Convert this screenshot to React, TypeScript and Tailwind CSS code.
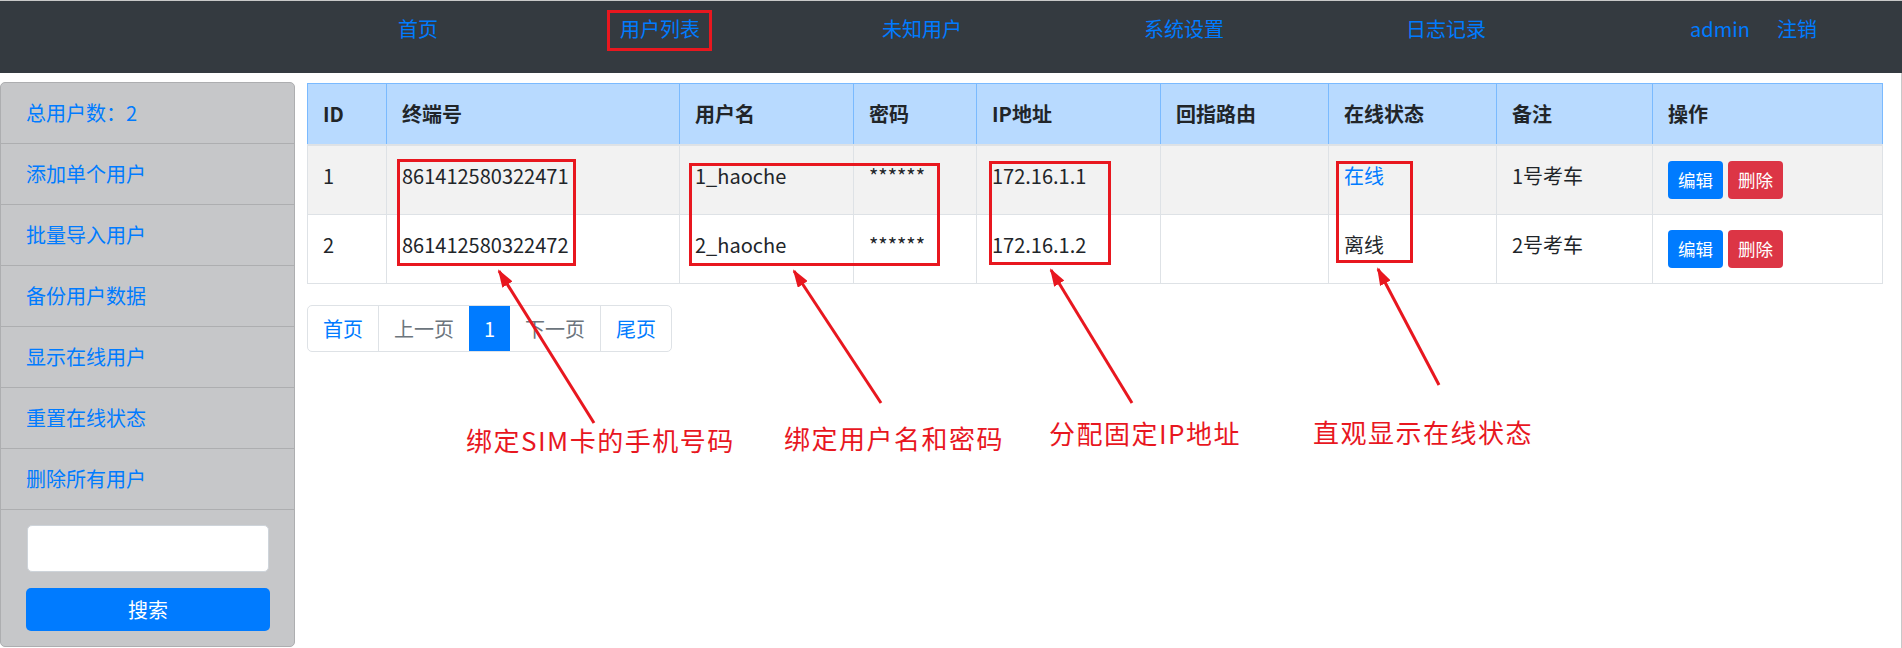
import React from "react";

const RED = "#e8171f";

const navItems = ["首页", "用户列表", "未知用户", "系统设置", "日志记录"];
const sideItems = ["总用户数：2", "添加单个用户", "批量导入用户", "备份用户数据", "显示在线用户", "重置在线状态", "删除所有用户"];
const headers: { t: string; w: string }[] = [
  { t: "ID", w: "w-[79px]" },
  { t: "终端号", w: "w-[293px]" },
  { t: "用户名", w: "w-[174px]" },
  { t: "密码", w: "w-[123px]" },
  { t: "IP地址", w: "w-[184px]" },
  { t: "回指路由", w: "w-[168px]" },
  { t: "在线状态", w: "w-[168px]" },
  { t: "备注", w: "w-[156px]" },
  { t: "操作", w: "w-[230px]" },
];
const rows = [
  { id: "1", sim: "861412580322471", user: "1_haoche", ip: "172.16.1.1", online: true, note: "1号考车" },
  { id: "2", sim: "861412580322472", user: "2_haoche", ip: "172.16.1.2", online: false, note: "2号考车" },
];

const boxes: [number, number, number, number][] = [
  [607, 10, 712, 51],
  [397, 159, 576, 266],
  [689, 163, 940, 266],
  [989, 161, 1111, 265],
  [1336, 161, 1413, 263],
];
const arrows: [number, number, number, number][] = [
  [594, 423, 499, 271],
  [881, 403, 794, 271],
  [1132, 403, 1051, 270],
  [1439, 385, 1378, 269],
];

export default function App() {
  return (
    <div className="relative w-[1902px] h-[648px] overflow-hidden bg-white text-[20px] text-[#212529] font-['Noto_Sans_CJK_SC',sans-serif]">
      <nav className="h-[73px] border-t border-[#c8c8c8] bg-[#343a40] flex items-start pt-[13px] leading-[30px] text-[#007bff]">
        <div className="flex gap-[182px] pl-[398px]">
          {navItems.map((n) => (
            <span key={n}>{n}</span>
          ))}
        </div>
        <div className="ml-auto mr-[85px] flex gap-[27px]">
          <span>admin</span>
          <span>注销</span>
        </div>
      </nav>

      <div className="flex h-[575px] pt-[9px] border-r border-[#c8c8c8]">
        <aside className="w-[295px] h-[565px] shrink-0 rounded-[5px] border border-[#adaeb0] bg-[#c6c7c9] flex flex-col">
          {sideItems.map((s) => (
            <div key={s} className="h-[61px] shrink-0 border-b border-[#adaeb0] pl-[25px] flex items-center text-[#007bff] leading-[30px]">
              {s}
            </div>
          ))}
          <div className="pt-[15px] pl-[25px] flex flex-col gap-[16px]">
            <input className="w-[242px] h-[47px] rounded-[5px] border border-[#ced4da] bg-white ml-px outline-none" />
            <button className="w-[244px] h-[43px] rounded-[5px] bg-[#007bff] text-white leading-[30px]">搜索</button>
          </div>
        </aside>

        <div className="ml-[12px] pt-px">
          <table className="w-[1575px] table-fixed border-collapse">
            <thead>
              <tr className="bg-[#b8daff]">
                {headers.map((h) => (
                  <th
                    key={h.t}
                    className={`${h.w} px-[15px] py-[15px] leading-[30px] text-left font-bold border border-[#7abaff] border-b-2 border-b-[#dee2e6]`}
                  >
                    {h.t}
                  </th>
                ))}
              </tr>
            </thead>
            <tbody>
              {rows.map((r, i) => (
                <tr key={r.id} className={i === 0 ? "bg-[#f2f2f2]" : "bg-white"}>
                  <td className="px-[15px] py-[15px] leading-[30px] align-top border border-[#dee2e6]">{r.id}</td>
                  <td className="px-[15px] py-[15px] leading-[30px] align-top border border-[#dee2e6]">{r.sim}</td>
                  <td className="px-[15px] py-[15px] leading-[30px] align-top border border-[#dee2e6]">{r.user}</td>
                  <td className="px-[15px] py-[15px] leading-[30px] align-top border border-[#dee2e6]">******</td>
                  <td className="px-[15px] py-[15px] leading-[30px] align-top border border-[#dee2e6]">{r.ip}</td>
                  <td className="px-[15px] py-[15px] leading-[30px] align-top border border-[#dee2e6]"></td>
                  <td className={`px-[15px] py-[15px] leading-[30px] align-top border border-[#dee2e6] ${r.online ? "text-[#007bff]" : ""}`}>
                    {r.online ? "在线" : "离线"}
                  </td>
                  <td className="px-[15px] py-[15px] leading-[30px] align-top border border-[#dee2e6]">{r.note}</td>
                  <td className="px-[15px] py-[15px] align-top border border-[#dee2e6]">
                    <div className="flex gap-[5px]">
                      <button className="h-[38px] px-[10px] rounded-[4px] bg-[#007bff] text-white text-[17.5px] leading-[26px]">编辑</button>
                      <button className="h-[38px] px-[10px] rounded-[4px] bg-[#dc3545] text-white text-[17.5px] leading-[26px]">删除</button>
                    </div>
                  </td>
                </tr>
              ))}
            </tbody>
          </table>

          <div className="mt-[21px] flex w-fit rounded-[5px] border border-[#dee2e6] overflow-hidden leading-[25px]">
            <span className="px-[15px] py-[10px] text-[#007bff]">首页</span>
            <span className="px-[15px] py-[10px] text-[#6c757d] border-l border-[#dee2e6]">上一页</span>
            <span className="px-[15px] py-[10px] bg-[#007bff] text-white">1</span>
            <span className="px-[15px] py-[10px] text-[#6c757d]">下一页</span>
            <span className="px-[15px] py-[10px] text-[#007bff] border-l border-[#dee2e6]">尾页</span>
          </div>
        </div>
      </div>

      <svg className="absolute left-0 top-0 pointer-events-none" width="1902" height="648" viewBox="0 0 1902 648">
        <defs>
          <marker id="ah" markerUnits="userSpaceOnUse" markerWidth="18" markerHeight="12" refX="16" refY="6" orient="auto">
            <path d="M0,0 L18,6 L0,12 z" fill={RED} />
          </marker>
        </defs>
        {boxes.map(([x0, y0, x1, y1], i) => (
          <rect key={i} x={x0 + 1.5} y={y0 + 1.5} width={x1 - x0 - 3} height={y1 - y0 - 3} fill="none" stroke={RED} strokeWidth="3" />
        ))}
        {arrows.map(([x0, y0, x1, y1], i) => (
          <line key={i} x1={x0} y1={y0} x2={x1} y2={y1} stroke={RED} strokeWidth="3" markerEnd="url(#ah)" />
        ))}
      </svg>

      <div className="absolute left-[466px] top-[427px] text-[26px] leading-[26px] tracking-[1.5px] whitespace-nowrap" style={{ color: RED }}>绑定SIM卡的手机号码</div>
      <div className="absolute left-[784px] top-[425px] text-[26px] leading-[26px] tracking-[1.5px] whitespace-nowrap" style={{ color: RED }}>绑定用户名和密码</div>
      <div className="absolute left-[1049px] top-[420px] text-[26px] leading-[26px] tracking-[1.5px] whitespace-nowrap" style={{ color: RED }}>分配固定IP地址</div>
      <div className="absolute left-[1313px] top-[419px] text-[26px] leading-[26px] tracking-[1.5px] whitespace-nowrap" style={{ color: RED }}>直观显示在线状态</div>
    </div>
  );
}
